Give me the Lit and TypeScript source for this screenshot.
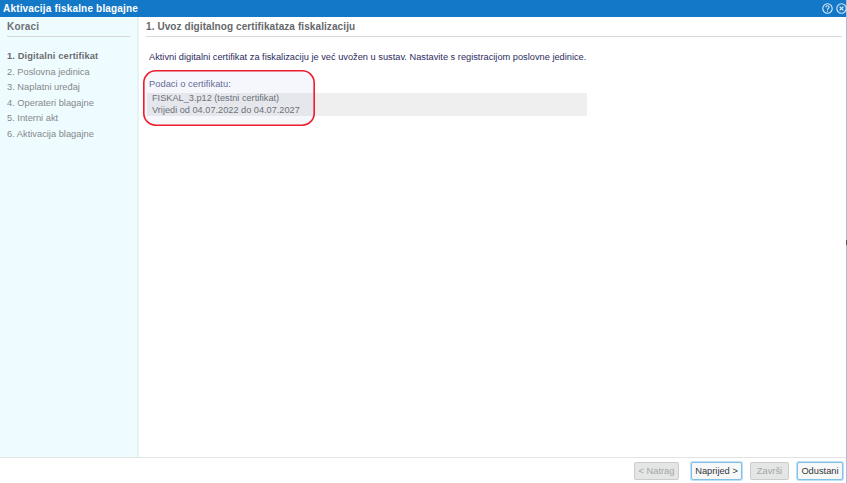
import { LitElement, html, css } from "lit";
import { customElement } from "lit/decorators.js";

@customElement("app-root")
export class AppRoot extends LitElement {
  static styles = css`
    :host { display: block; width: 847px; height: 483px; font-family: "Liberation Sans", Arial, sans-serif; background: #fff; overflow: hidden; }
    .win { position: relative; width: 846px; height: 483px; display: flex; flex-direction: column; border-right: 1px solid #b4bbd0; }
    .notch { position: absolute; right: -1px; top: 240px; width: 1px; height: 5px; background: #50545c; }
    .title { height: 17px; flex: none; background: #1378c8; color: #fff; font-size: 10px; font-weight: bold; letter-spacing: 0.18px; line-height: 18px; padding-left: 3px; display: flex; align-items: center; justify-content: space-between; }
    .icons { display: flex; gap: 3px; margin-right: -1px; }
    .icons svg { display: block; }
    .main { flex: 1; display: flex; min-height: 0; border-bottom: 1px solid #e2e4e4; }
    .side { flex: none; background: #effcff; border-right: 2px solid #e6f2f4; padding: 0 7px; box-sizing: content-box; width: 123px; }
    .side h2 { margin: 0; height: 19px; font-size: 10px; font-weight: bold; color: #6d6f72; letter-spacing: 0.2px; line-height: 20px; border-bottom: 1px solid #d5d9d9; }
    .side ol { list-style: none; margin: 12px 0 0; padding: 0; }
    .side li { font-size: 9.3px; line-height: 15.6px; color: #85878a; white-space: nowrap; }
    .side li.on { font-weight: bold; color: #6a6c70; letter-spacing: 0.13px; }
    .content { flex: 1; padding: 0 4px 0 7px; min-width: 0; }
    .content h1 { margin: 0; height: 19px; font-size: 10px; font-weight: bold; color: #65676b; letter-spacing: 0.09px; line-height: 20px; border-bottom: 1px solid #d5d9d9; }
    .lead { margin: 14px 0 0 3px; font-size: 9.26px; line-height: 12px; color: #2d2c5e; }
    .label { margin: 15px 0 0 3px; font-size: 9.3px; line-height: 12px; color: #6b6b96; letter-spacing: 0.03px; }
    .box { margin: 3px 0 0 1px; width: 440px; box-sizing: border-box; padding: 0 5px; height: 23px; background: #efefef; color: #707276; font-size: 9.2px; line-height: 11.5px; }
    .callout { position: absolute; left: 143px; top: 70px; width: 172px; height: 56px; display: block; }
    .foot { height: 25px; flex: none; box-sizing: border-box; display: flex; justify-content: flex-end; align-items: flex-start; padding: 4px 3px 0 0; background: #fff; }
    .btn { height: 18px; box-sizing: border-box; border: 1px solid #b9bcbe; border-radius: 2px; background: #f3f4f4; color: #33363a; font: 9.3px/16px "Liberation Sans", Arial, sans-serif; padding: 0; text-align: center; }
    .btn.off { background: #e4e5e5; color: #a4a6a8; border-color: #c9cbcc; }
    .btn.focus { border-color: #80bfe8; box-shadow: 0 0 0 1px #bfe0f5; background: #f7f8f8; }
    .b1 { width: 45px; margin-right: 12px; }
    .b2 { width: 51px; margin-right: 8px; }
    .b3 { width: 39px; margin-right: 8px; }
    .b4 { width: 46px; }
  `;

  render() {
    const steps = ["1. Digitalni certifikat", "2. Poslovna jedinica", "3. Naplatni uređaj", "4. Operateri blagajne", "5. Interni akt", "6. Aktivacija blagajne"];
    return html`
      <div class="win">
        <div class="title">
          <span>Aktivacija fiskalne blagajne</span>
          <span class="icons">
            <svg width="11" height="11" viewBox="0 0 11 11" fill="none" stroke="#dcebf7">
              <circle cx="5.5" cy="5.5" r="4.7" stroke-width="1.1"/>
              <path d="M3.9 4.3c0-2.1 3.2-2.1 3.2-.1 0 1.2-1.6 1.2-1.6 2.5" stroke-width="1.1"/>
              <path d="M5.5 7.5v1.2" stroke-width="1.1"/>
            </svg>
            <svg width="11" height="11" viewBox="0 0 11 11" fill="none" stroke="#dcebf7">
              <circle cx="5.5" cy="5.5" r="4.7" stroke-width="1.1"/>
              <path d="M3.6 3.6l3.8 3.8M7.4 3.6l-3.8 3.8" stroke-width="1.3"/>
            </svg>
          </span>
        </div>
        <div class="main">
          <aside class="side">
            <h2>Koraci</h2>
            <ol>${steps.map((s, i) => html`<li class=${i === 0 ? "on" : ""}>${s}</li>`)}</ol>
          </aside>
          <section class="content">
            <h1>1. Uvoz digitalnog certifikataza fiskalizaciju</h1>
            <p class="lead">Aktivni digitalni certifikat za fiskalizaciju je već uvožen u sustav. Nastavite s registracijom poslovne jedinice.</p>
            <p class="label">Podaci o certifikatu:</p>
            <div class="box">FISKAL_3.p12 (testni certifikat)<br />Vrijedi od 04.07.2022 do 04.07.2027</div>
          </section>
        </div>
        <div class="foot">
          <button class="btn off b1">&lt; Natrag</button>
          <button class="btn focus b2">Naprijed &gt;</button>
          <button class="btn off b3">Završi</button>
          <button class="btn focus b4">Odustani</button>
        </div>
        <svg class="callout" viewBox="0 0 172 56">
          <rect x="0.8" y="0.8" width="170.4" height="54.4" rx="12" fill="#3c5abe" fill-opacity="0.05" stroke="#ee1c2c" stroke-width="1.6"/>
        </svg>
        <div class="notch"></div>
      </div>
    `;
  }
}
